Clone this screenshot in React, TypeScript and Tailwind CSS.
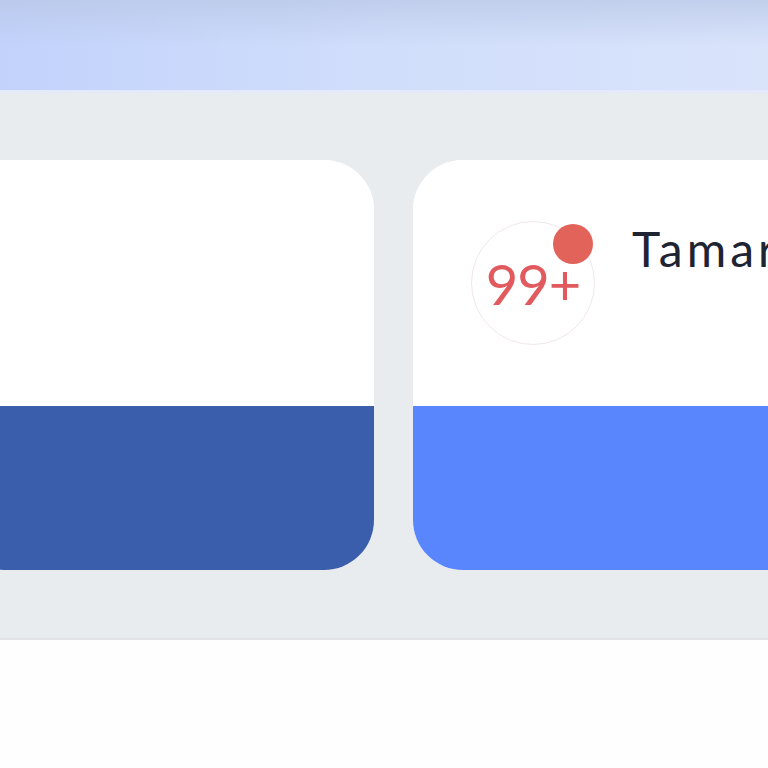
export default function App() {
  return (
    <div className="w-[768px] h-[768px] overflow-hidden flex flex-col bg-[#fefefe]" style={{ fontFamily: "Lato, 'Noto Sans', sans-serif" }}>
      <div className="h-[93px] shrink-0 bg-gradient-to-r from-[#c2d2fb] via-[#d1defb] to-[#d9e4fb] relative">
        <div className="absolute inset-0 bg-gradient-to-b from-[#b9c7e6]/70 via-transparent to-transparent" />
        <div className="absolute left-0 right-0 bottom-0 h-[3px] bg-[#e4eafb]" />
      </div>
      <div className="h-[547px] shrink-0 bg-[#e9ecef] pt-[67px] border-b-2 border-[#e1e2e6] overflow-hidden">
        <div className="flex gap-[39px] -ml-[46px]">
          <div className="w-[420px] h-[410px] shrink-0 rounded-[50px] overflow-hidden flex flex-col bg-white">
            <div className="h-[246px] bg-white" />
            <div className="flex-1 bg-[#3a5eab]" />
          </div>
          <div className="w-[420px] h-[410px] shrink-0 rounded-[50px] overflow-hidden flex flex-col bg-white">
            <div className="h-[246px] bg-white flex items-start pl-[58px] pt-[61px]">
              <div className="relative w-[124px] h-[124px] rounded-full border border-[#f1e7e7] flex items-center justify-center">
                <span className="text-[56px] leading-none text-[#e05a5e] tracking-[-1px] mt-[2px]">99+</span>
                <div className="absolute left-[81px] top-[2px] w-[40px] h-[40px] rounded-full bg-[#e2635a]" />
              </div>
              <div className="ml-[37px] mt-[4px] text-[48px] leading-none text-[#1f2433] tracking-[4px] whitespace-nowrap">Tamar</div>
            </div>
            <div className="flex-1 bg-[#5985fd]" />
          </div>
        </div>
      </div>
      <div className="flex-1 bg-[#fefefe]" />
    </div>
  );
}
